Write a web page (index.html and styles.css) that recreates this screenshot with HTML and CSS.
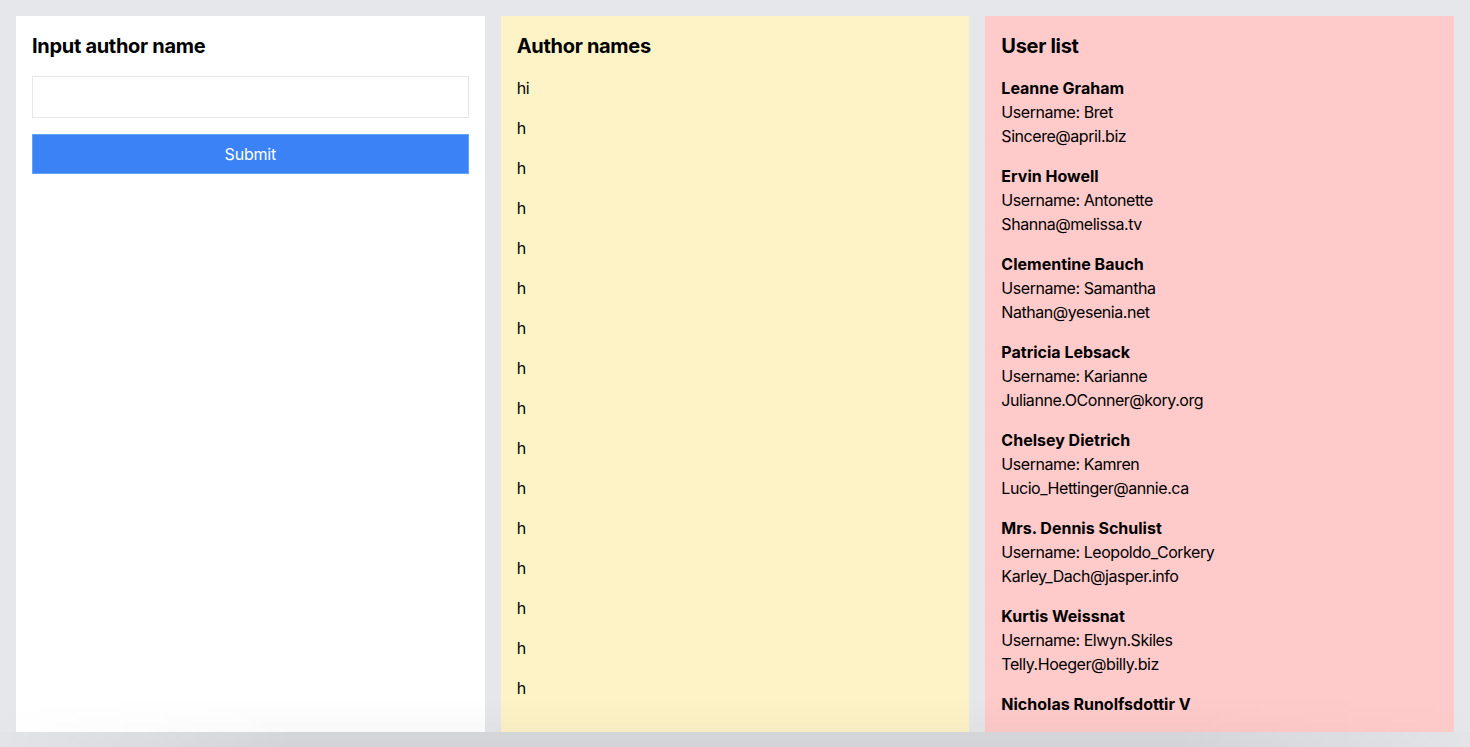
FILE: index.html
```html
<!DOCTYPE html>
<html>
<head>
<meta charset="utf-8">
<link rel="stylesheet" href="styles.css">
</head>
<body>
<div class="page">
  <section class="panel panel-white">
    <h2 class="title">Input author name</h2>
    <input class="field" type="text">
    <button class="submit">Submit</button>
  </section>
  <section class="panel panel-yellow">
    <h2 class="title">Author names</h2>
    <p class="author">hi</p>
    <p class="author">h</p>
    <p class="author">h</p>
    <p class="author">h</p>
    <p class="author">h</p>
    <p class="author">h</p>
    <p class="author">h</p>
    <p class="author">h</p>
    <p class="author">h</p>
    <p class="author">h</p>
    <p class="author">h</p>
    <p class="author">h</p>
    <p class="author">h</p>
    <p class="author">h</p>
    <p class="author">h</p>
    <p class="author">h</p>
  </section>
  <section class="panel panel-red">
    <h2 class="title">User list</h2>
    <div class="user"><div class="name">Leanne Graham</div><div>Username: Bret</div><div>Sincere@april.biz</div></div>
    <div class="user"><div class="name">Ervin Howell</div><div>Username: Antonette</div><div>Shanna@melissa.tv</div></div>
    <div class="user"><div class="name">Clementine Bauch</div><div>Username: Samantha</div><div>Nathan@yesenia.net</div></div>
    <div class="user"><div class="name">Patricia Lebsack</div><div>Username: Karianne</div><div>Julianne.OConner@kory.org</div></div>
    <div class="user"><div class="name">Chelsey Dietrich</div><div>Username: Kamren</div><div>Lucio_Hettinger@annie.ca</div></div>
    <div class="user"><div class="name">Mrs. Dennis Schulist</div><div>Username: Leopoldo_Corkery</div><div>Karley_Dach@jasper.info</div></div>
    <div class="user"><div class="name">Kurtis Weissnat</div><div>Username: Elwyn.Skiles</div><div>Telly.Hoeger@billy.biz</div></div>
    <div class="user"><div class="name">Nicholas Runolfsdottir V</div></div>
  </section>
</div>
<div class="shade"></div>
</body>
</html>
```
FILE: styles.css
```css
* { box-sizing: border-box; }
html, body { margin: 0; padding: 0; height: 100%; }
body {
  background: #e5e7eb;
  font-family: Inter, "Noto Sans", sans-serif;
  font-size: 16px;
  line-height: 24px;
  letter-spacing: -0.45px;
  color: #000;
  overflow: hidden;
}
.page {
  display: grid;
  grid-template-columns: 1fr 1fr 1fr;
  gap: 16px;
  padding: 16px 16px 15px 16px;
  height: 747px;
}
.panel {
  padding: 16px;
  overflow: hidden;
  display: flex;
  flex-direction: column;
}
.panel-white { background: #ffffff; }
.panel-yellow { background: #fef3c7; }
.panel-red { background: #fecaca; }
.title {
  margin: 0 0 16px 0;
  font-size: 20px;
  line-height: 28px;
  font-weight: 700;
  letter-spacing: -0.3px;
}
.field {
  height: 42px;
  border: 1px solid #e5e7eb;
  background: #fff;
  padding: 8px;
  font: inherit;
  outline: none;
}
.submit {
  margin-top: 16px;
  height: 40px;
  background: #3b82f6;
  border: 1px solid #60a5fa;
  color: #fff;
  font: inherit;
  letter-spacing: -0.2px;
  font-size: 16px;
}
.author { margin: 0 0 16px 0; }
.user { margin-bottom: 16px; }
.name { font-weight: 700; letter-spacing: 0; }
.shade {
  position: fixed;
  left: 0; right: 0; bottom: 0;
  height: 50px;
  pointer-events: none;
  background: linear-gradient(to bottom, rgba(0,0,0,0) 0%, rgba(0,0,0,0.025) 70%, rgba(0,0,0,0.075) 71%, rgba(0,0,0,0.08) 100%);
  -webkit-mask-image: linear-gradient(to right, rgba(0,0,0,0.15) 0%, #000 20%, #000 80%, rgba(0,0,0,0.15) 100%);
  mask-image: linear-gradient(to right, rgba(0,0,0,0.15) 0%, #000 20%, #000 80%, rgba(0,0,0,0.15) 100%);
}
```
